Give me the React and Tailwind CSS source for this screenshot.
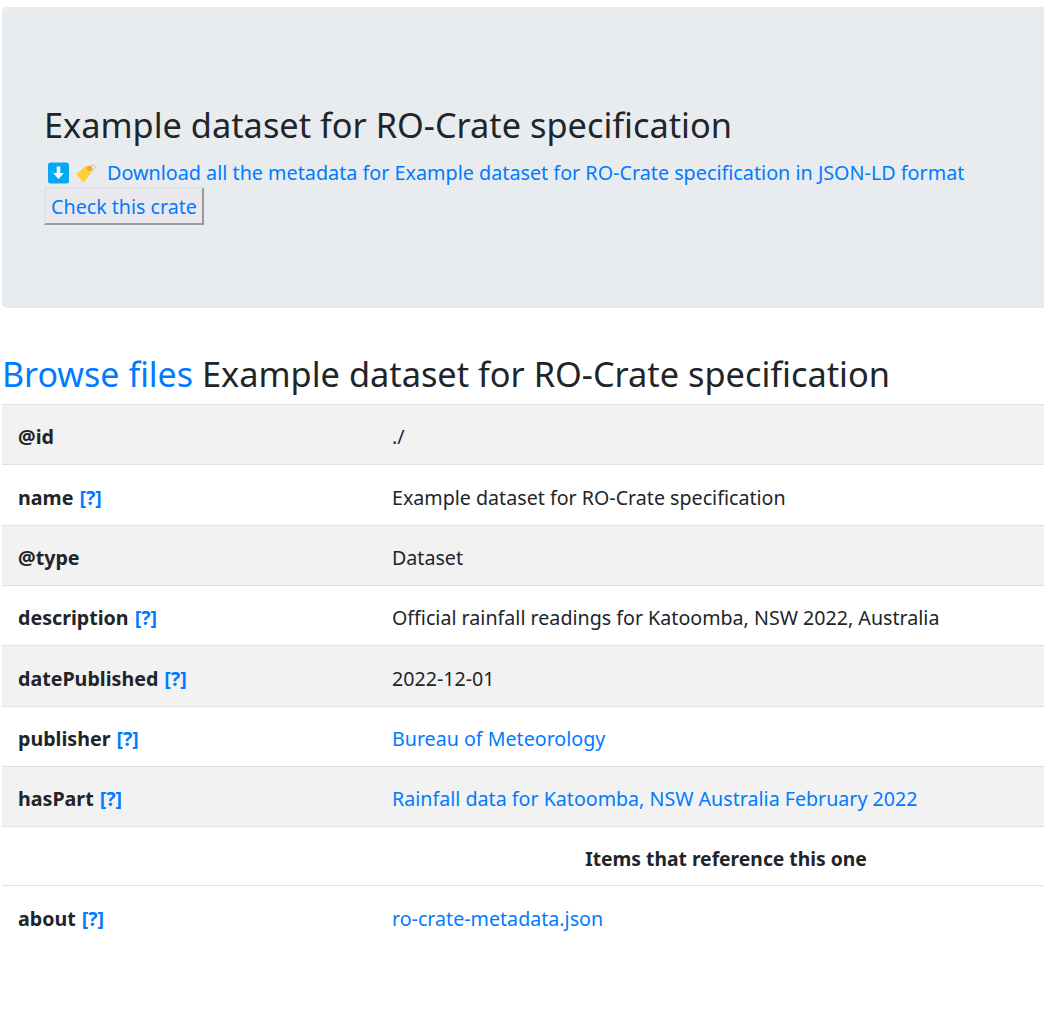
function Q() {
  return <a className="text-[#007bff] font-bold">[?]</a>;
}
function Row({ k, q, v, link, odd }) {
  return (
    <div className={`flex border-t border-[#dee2e6] h-[60.35px] items-center pt-[4px] ${odd ? 'bg-[#f2f2f2]' : ''}`}>
      <div className="w-[375px] pl-4 font-bold text-[#212529] flex gap-[6px]">
        <span>{k}</span>{q && <Q />}
      </div>
      <div className={`pl-[15px] ${link ? 'text-[#007bff]' : 'text-[#212529]'}`}>{v}</div>
    </div>
  );
}
function Emoji() {
  return (
    <svg width="50" height="22" viewBox="0 0 50 22" className="shrink-0 ml-[4px]">
      <rect x="0" y="0.5" width="21" height="21" rx="2.5" fill="#03a9f4" />
      <path d="M8.7 4.5h3.6v6.5h3.6l-5.4 6-5.4-6h3.6z" fill="#fff" />
      <path d="M28 12.5 38.5 3.5l5 .5 1.5 4.5L35.5 20.5z" fill="#fdd135" />
      <circle cx="41.5" cy="6.5" r="1.6" fill="none" stroke="#e8835a" strokeWidth="1.1" />
      <path d="M42.5 4c1.6-1.7 4-1 4.4.6.3 1.3-.6 2.6-1.9 2.8" fill="none" stroke="#b9b9b9" strokeWidth="0.9" />
    </svg>
  );
}
export default function App() {
  return (
    <div className="w-[1044px] h-[1027px] overflow-hidden bg-white text-[19.65px] leading-[29px] pl-[2px] pt-[7px] font-['Noto_Sans',sans-serif] text-[#212529]">
      <div className="w-[1100px] h-[301px] bg-[#e9ecef] rounded-[5px] pl-[42px] pt-[93px]">
        <h1 className="text-[34.35px] leading-[50px] text-[#212529]">Example dataset for RO-Crate specification</h1>
        <div className="flex items-center h-[29px] mt-[8px]">
          <Emoji />
          <a className="text-[#007bff] ml-[9px] text-[19.76px]">Download all the metadata for Example dataset for RO-Crate specification in JSON-LD format</a>
        </div>
        <button className="block bg-[#e9e9ed] text-[#007bff] h-[38px] w-[160px] pt-px text-[19.65px] border-2 border-t-[#e2e2e2] border-l-[#e2e2e2] border-r-[#9a9a9a] border-b-[#9a9a9a]">Check this crate</button>
      </div>
      <h2 className="text-[34.35px] leading-[50px] mt-[41px] mb-[5px] whitespace-nowrap"><a className="text-[#007bff] text-[34px]">Browse files</a> Example dataset for RO-Crate specification</h2>
      <div className="w-[1100px]">
        <Row k="@id" v="./" odd />
        <Row k="name" q v="Example dataset for RO-Crate specification" />
        <Row k="@type" v="Dataset" odd />
        <Row k="description" q v="Official rainfall readings for Katoomba, NSW 2022, Australia" />
        <Row k="datePublished" q v="2022-12-01" odd />
        <Row k="publisher" q v="Bureau of Meteorology" link />
        <Row k="hasPart" q v="Rainfall data for Katoomba, NSW Australia February 2022" link odd />
        <div className="border-t border-[#dee2e6] h-[59px] flex items-center pt-[4px] font-bold">
          <span className="ml-[375px] w-[698px] text-center text-[19.3px]">Items that reference this one</span>
        </div>
        <Row k="about" q v="ro-crate-metadata.json" link />
      </div>
    </div>
  );
}
